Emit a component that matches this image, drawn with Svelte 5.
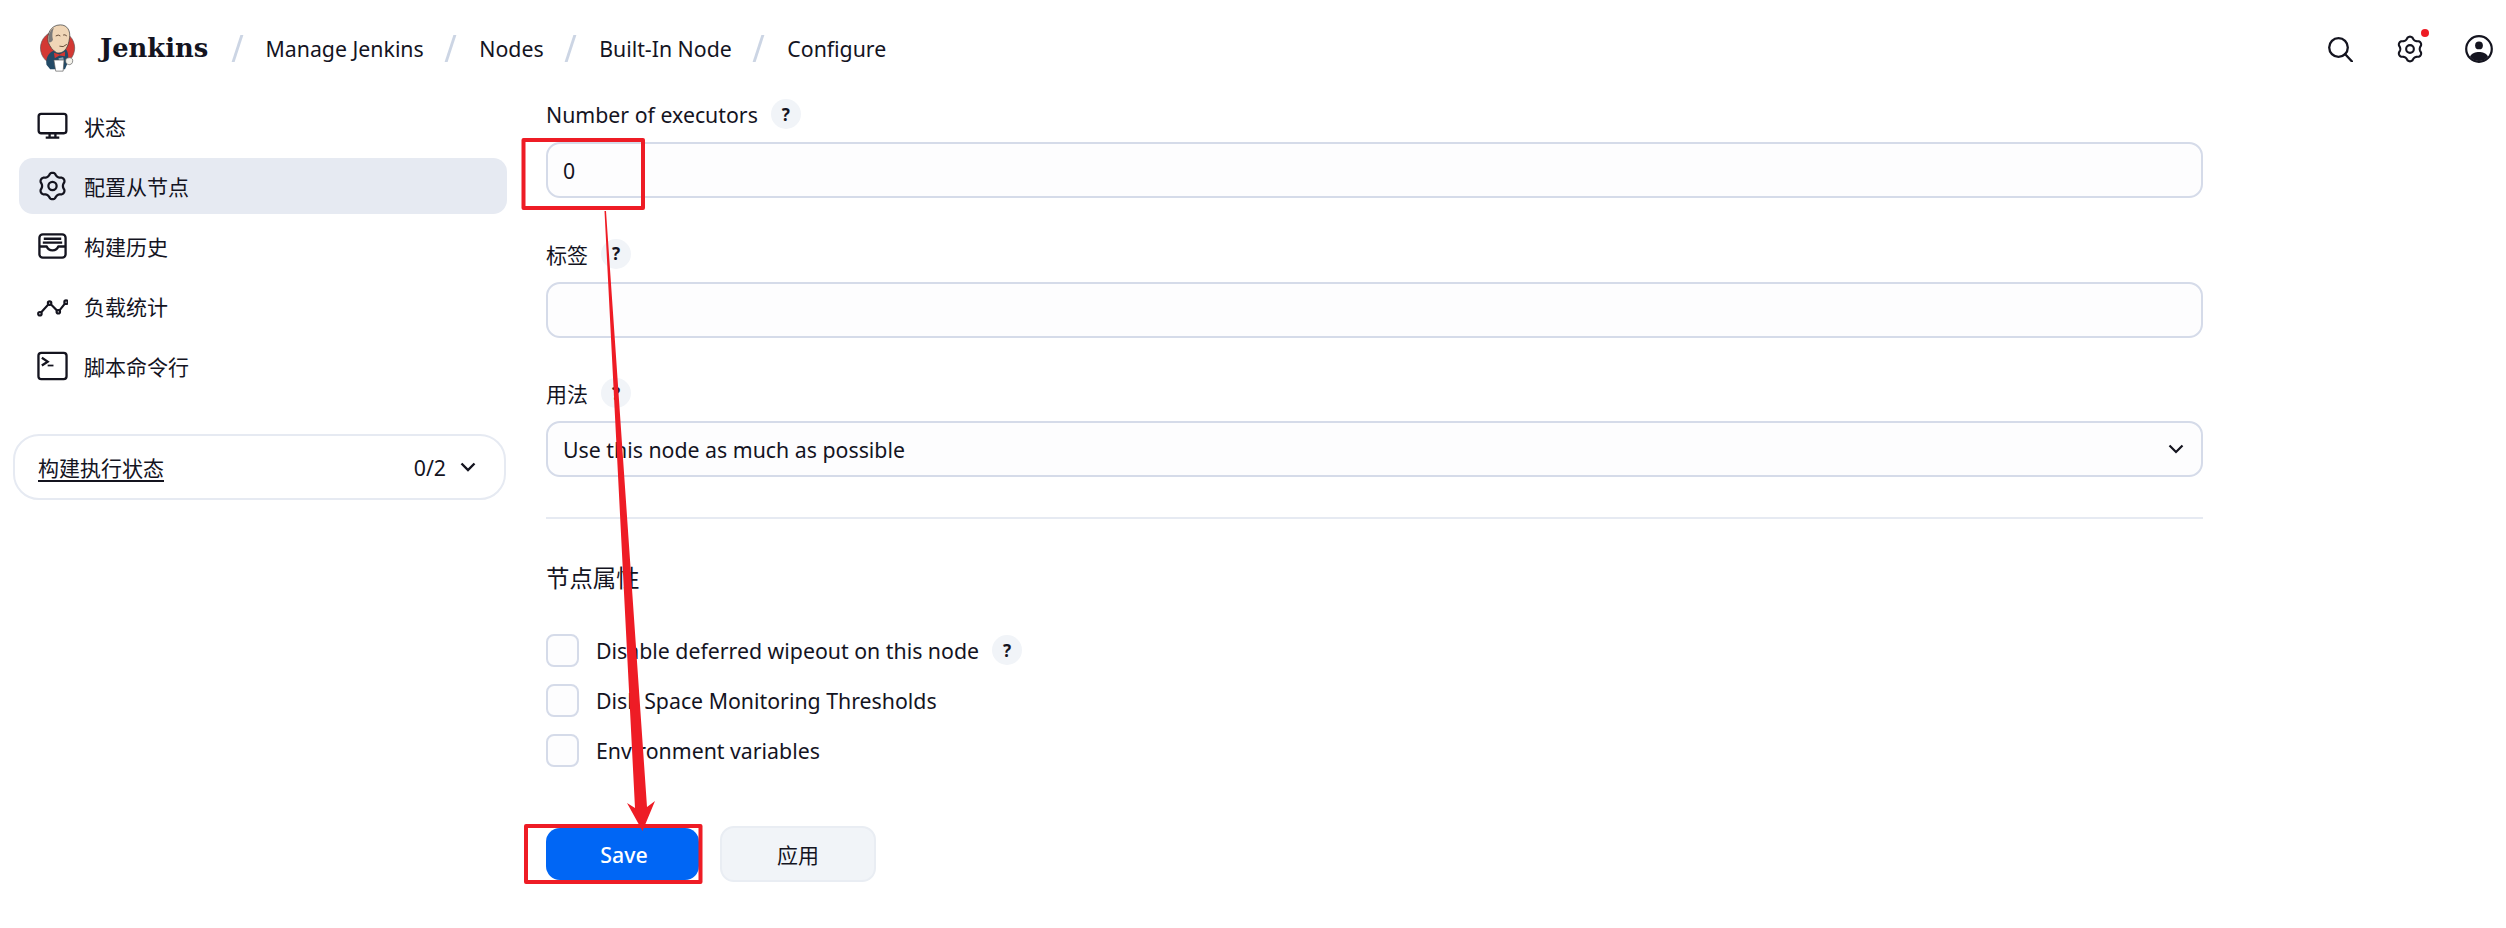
<script>
  const nav = [
    { label: '状态', icon: 'monitor' },
    { label: '配置从节点', icon: 'gear', active: true },
    { label: '构建历史', icon: 'tray' },
    { label: '负载统计', icon: 'pulse' },
    { label: '脚本命令行', icon: 'term' }
  ];
  const crumbs = ['Manage Jenkins', 'Nodes', 'Built-In Node', 'Configure'];
  const checks = [
    { label: 'Disable deferred wipeout on this node', help: true },
    { label: 'Disk Space Monitoring Thresholds' },
    { label: 'Environment variables' }
  ];
  function gearPath(cx, cy, r, amp) {
    let d = '';
    for (let i = 0; i < 120; i++) {
      const t = (i / 120) * Math.PI * 2;
      const c = Math.cos(6 * t);
      const rr = r + amp * Math.sign(c) * Math.pow(Math.abs(c), 0.7);
      d += (i ? 'L' : 'M') + (cx + rr * Math.sin(t)).toFixed(2) + ' ' + (cy - rr * Math.cos(t)).toFixed(2);
    }
    return d + 'Z';
  }
  const gear = gearPath(16, 16, 12.6, 1.5);
</script>

{#snippet gearIcon(cls)}
  <svg class={cls} viewBox="0 0 32 32" fill="none" stroke="#14141f" stroke-width="2.4" stroke-linejoin="round">
    <path d={gear} />
    <circle cx="16" cy="16" r="4.4" />
  </svg>
{/snippet}

{#snippet help()}
  <span class="help">?</span>
{/snippet}

<div class="page">
  <header class="top">
    <div class="brand">
      <svg class="logo" viewBox="0 0 40 52">
        <circle cx="19" cy="26" r="18.500" fill="#d33833" stroke="#4a4a4a" stroke-width=".6" />
        <path d="M7 44c-1-7 2-13 8-15l5 1 8-3c3 4 3 10 2 15l-3 7H11z" fill="#234a66" />
        <path d="M9 20C7 12 11 1 22 1c8 0 11 7 10 14-1 6-2 9-4 12-3 4-7 5-10 4-4-2-7-6-9-11z" fill="#f0d6b7" stroke="#3f3f3f" stroke-width=".8" />
        <path d="M10 20c-2-6 0-13 5-16-2 5-2 9-1 13-1 2-2 3-4 3z" fill="#7a7a7a" />
        <path d="M17 13q3-2 5 0M25 12q2-1 4 1M21 24q4 2 8-2" fill="none" stroke="#5b4230" stroke-width="1" />
        <path d="M15 31l6 2 6-3v5l-6-1-5 3z" fill="#d33833" />
        <path d="M20 37l5-1 1 4-5 2z" fill="#8fa6b5" />
        <path d="M15 39h11l-1 12h-8z" fill="#fff" stroke="#555" stroke-width=".7" />
        <path d="M28 38c2-2 6-2 7 0s0 6-3 6-5-2-4-6z" fill="#f3f1ea" stroke="#555" stroke-width=".7" />
      </svg>
      <span class="wordmark">Jenkins</span>
    </div>
    {#each crumbs as c}
      <span class="slash"></span>
      <span class="crumb">{c}</span>
    {/each}
    <div class="actions">
      <svg class="a-search" viewBox="0 0 25 25" fill="none" stroke="#14141f" stroke-width="2.300">
        <circle cx="10.500" cy="10.500" r="9.300" />
        <path d="M17 17l7 7.500" stroke-linecap="round" />
      </svg>
      <span class="a-gear">
        {@render gearIcon('gear-top')}
        <span class="dot"></span>
      </span>
      <svg class="a-user" viewBox="0 0 28 28">
        <circle cx="14" cy="14" r="12.800" fill="none" stroke="#14141f" stroke-width="2.200" />
        <circle cx="14" cy="10.400" r="3.900" fill="#14141f" />
        <path d="M5 21.500C7 18 10.500 17 14 17s7 1 9 4.500C21 24.800 17.500 26 14 26s-7-1.200-9-4.500z" fill="#14141f" />
      </svg>
    </div>
  </header>

  <div class="body">
    <aside class="side">
      <nav class="nav">
        {#each nav as n}
          <div class="item" class:active={n.active}>
            <span class="ico">
              {#if n.icon === 'monitor'}
                <svg viewBox="0 0 32 28" fill="none" stroke="#14141f" stroke-width="2.400">
                  <rect x="1.700" y="1.500" width="28.600" height="20" rx="2.500" />
                  <path d="M13 22v3M19 22v3M9 26h14" />
                </svg>
              {:else if n.icon === 'gear'}
                {@render gearIcon('')}
              {:else if n.icon === 'tray'}
                <svg viewBox="0 0 32 28" fill="none" stroke="#14141f" stroke-width="2.400" stroke-linejoin="round">
                  <rect x="2.500" y="2" width="27" height="24" rx="3.500" />
                  <path d="M7 6.500h18M6 10.500h20M2.500 14.500h7.500c1 3 3 4 6 4s5-1 6-4h7.500" />
                </svg>
              {:else if n.icon === 'pulse'}
                <svg viewBox="0 0 32 28" fill="none" stroke="#14141f" stroke-width="2.200">
                  <path d="M3 22L13 11l9 9 8-10" />
                  <circle cx="3" cy="22" r="1.800" fill="#fff" />
                  <circle cx="13" cy="11" r="1.800" fill="#fff" />
                  <circle cx="22" cy="20" r="1.800" fill="#fff" />
                  <circle cx="30" cy="10" r="1.800" fill="#fff" />
                </svg>
              {:else}
                <svg viewBox="0 0 32 30" fill="none" stroke="#14141f" stroke-width="2.400">
                  <rect x="1.500" y="1.500" width="29" height="27" rx="3" />
                  <path d="M5 6.500l6 4-6 4" />
                  <path d="M11 14.500h6" stroke-width="1.800" />
                </svg>
              {/if}
            </span>
            <span class="item-label">{n.label}</span>
          </div>
        {/each}
      </nav>
      <div class="exec">
        <span class="exec-title">构建执行状态</span>
        <span class="exec-count">0/2</span>
        <svg class="exec-chev" viewBox="0 0 16 10" fill="none" stroke="#14141f" stroke-width="2.400">
          <path d="M1.500 1.500L8 8l6.500-6.500" />
        </svg>
      </div>
    </aside>

    <main class="form">
      <div class="group">
        <div class="label"><span class="latin">Number of executors</span>{@render help()}</div>
        <div class="field"><span class="latin">0</span></div>
      </div>
      <div class="group">
        <div class="label"><span class="cjk">标签</span>{@render help()}</div>
        <div class="field"></div>
      </div>
      <div class="group">
        <div class="label"><span class="cjk">用法</span>{@render help()}</div>
        <div class="field select">
          <span class="latin">Use this node as much as possible</span>
          <svg class="sel-chev" viewBox="0 0 16 10" fill="none" stroke="#14141f" stroke-width="2.200">
            <path d="M1.500 1.500L8 8l6.500-6.500" />
          </svg>
        </div>
      </div>
      <hr class="rule" />
      <h2 class="section">节点属性</h2>
      <div class="checks">
        {#each checks as c}
          <div class="check">
            <span class="box"></span>
            <span class="latin">{c.label}</span>
            {#if c.help}{@render help()}{/if}
          </div>
        {/each}
      </div>
      <div class="buttons">
        <button class="save">Save</button>
        <button class="apply">应用</button>
      </div>
    </main>
  </div>

  <svg class="annot" viewBox="0 0 2506 928" fill="none">
    <rect x="523.500" y="140" width="119.500" height="68" stroke="#ee1c25" stroke-width="4" stroke-linejoin="round" />
    <rect x="526" y="826" width="174.500" height="56" stroke="#ee1c25" stroke-width="4" stroke-linejoin="round" />
    <polygon fill="#ee1c25" points="604.500,211 606,211 647,807 655,801 642.500,831 627,803 635,808" />
  </svg>
</div>

<style>
  :global(body) {
    margin: 0;
    background: #fff;
  }
  .page {
    position: relative;
    width: 2506px;
    height: 928px;
    overflow: hidden;
    background: #fff;
    color: #14141f;
    font-family: "Noto Sans", "Noto Sans CJK SC", sans-serif;
  }
  .top {
    height: 96px;
    display: flex;
    align-items: center;
    padding-left: 40px;
    box-sizing: border-box;
  }
  .brand {
    display: flex;
    align-items: center;
    gap: 23px;
  }
  .logo {
    width: 37px;
    height: 50px;
  }
  .wordmark {
    font-family: "DejaVu Serif", serif;
    font-weight: 700;
    font-size: 25.800px;
    width: 110px;
    white-space: nowrap;
  }
  .slash {
    width: 2.500px;
    height: 27px;
    background: #ccd5e4;
    transform: skewX(-18deg);
    margin: 0 27.500px 0 25.500px;
  }
  .crumb {
    font-size: 21.300px;
    white-space: nowrap;
  }
  .actions {
    margin-left: auto;
    margin-top: 2px;
    display: flex;
    align-items: center;
    gap: 41px;
    padding-right: 13px;
  }
  .a-search {
    width: 25px;
    height: 25px;
    margin-right: 2px;
  }
  .a-gear {
    position: relative;
    width: 28px;
    height: 28px;
    display: block;
  }
  .a-gear :global(.gear-top) {
    width: 28px;
    height: 28px;
    display: block;
  }
  .dot {
    position: absolute;
    width: 8px;
    height: 8px;
    border-radius: 50%;
    background: #ee1c25;
    top: -6px;
    right: -5px;
  }
  .a-user {
    width: 28px;
    height: 28px;
  }
  .body {
    display: flex;
  }
  .side {
    width: 533px;
    flex: none;
    padding-left: 13px;
    box-sizing: border-box;
  }
  .nav {
    display: flex;
    flex-direction: column;
    gap: 4px;
    margin-left: 6px;
    width: 488px;
    padding-top: 2px;
  }
  .item {
    height: 56px;
    display: flex;
    align-items: center;
    padding-left: 18px;
    gap: 16px;
    border-radius: 14px;
    font-size: 21px;
  }
  .item.active {
    background: #e6eaf2;
  }
  .ico {
    width: 31px;
    height: 30px;
    display: flex;
    align-items: center;
    justify-content: center;
  }
  .ico svg {
    width: 31px;
    height: 30px;
  }
  .exec {
    margin-top: 40px;
    width: 493px;
    height: 66px;
    box-sizing: border-box;
    border: 2px solid #e6eaf2;
    border-radius: 26px;
    display: flex;
    align-items: center;
    padding: 0 28px 0 23px;
    font-size: 21px;
  }
  .exec-title {
    text-decoration: underline;
    text-underline-offset: 4px;
    flex: 1;
  }
  .exec-count {
    font-size: 21.300px;
    margin-right: 14px;
  }
  .exec-chev {
    width: 16px;
    height: 10px;
  }
  .form {
    width: 1657px;
    margin-left: 13px;
    padding-top: 2px;
  }
  .group {
    margin-bottom: 39.500px;
  }
  .label {
    height: 32px;
    display: flex;
    align-items: center;
    gap: 13px;
    margin-bottom: 12px;
  }
  .latin {
    font-size: 21.300px;
    white-space: nowrap;
  }
  .cjk {
    font-size: 21px;
  }
  .help {
    width: 30px;
    height: 30px;
    border-radius: 50%;
    background: #f1f4f8;
    display: flex;
    align-items: center;
    justify-content: center;
    font-weight: 700;
    font-size: 17px;
    flex: none;
  }
  .field {
    height: 56px;
    box-sizing: border-box;
    border: 2px solid #d5dbe9;
    border-radius: 14px;
    background: #fdfdfe;
    display: flex;
    align-items: center;
    padding: 0 15px;
  }
  .select {
    justify-content: space-between;
  }
  .sel-chev {
    width: 16px;
    height: 10px;
    margin-right: 2px;
  }
  .rule {
    border: 0;
    height: 2px;
    background: #e6eaf2;
    margin: 0 0 42px;
  }
  .section {
    margin: 0 0 39px;
    font-size: 23.400px;
    font-weight: 400;
    line-height: 34px;
  }
  .checks {
    display: flex;
    flex-direction: column;
    gap: 17px;
  }
  .check {
    height: 33px;
    display: flex;
    align-items: center;
  }
  .box {
    width: 33px;
    height: 33px;
    box-sizing: border-box;
    border: 2px solid #d5dbe9;
    border-radius: 8px;
    background: #fdfdfe;
    margin-right: 17px;
    flex: none;
  }
  .check .help {
    margin-left: 13px;
  }
  .buttons {
    margin-top: 59.500px;
    display: flex;
    align-items: center;
    gap: 22px;
  }
  button {
    font-family: inherit;
    border-radius: 14px;
    box-sizing: border-box;
    padding: 0;
  }
  .save {
    width: 153px;
    height: 52px;
    background: #0066f5;
    border: 0;
    color: #fff;
    font-size: 21.300px;
    font-weight: 500;
    padding-left: 3px;
  }
  .apply {
    width: 156px;
    height: 56px;
    margin-left: -1px;
    background: #f1f4f8;
    border: 2px solid #e9edf3;
    color: #14141f;
    font-size: 21px;
  }
  .annot {
    position: absolute;
    inset: 0;
    width: 2506px;
    height: 928px;
    pointer-events: none;
  }
</style>
